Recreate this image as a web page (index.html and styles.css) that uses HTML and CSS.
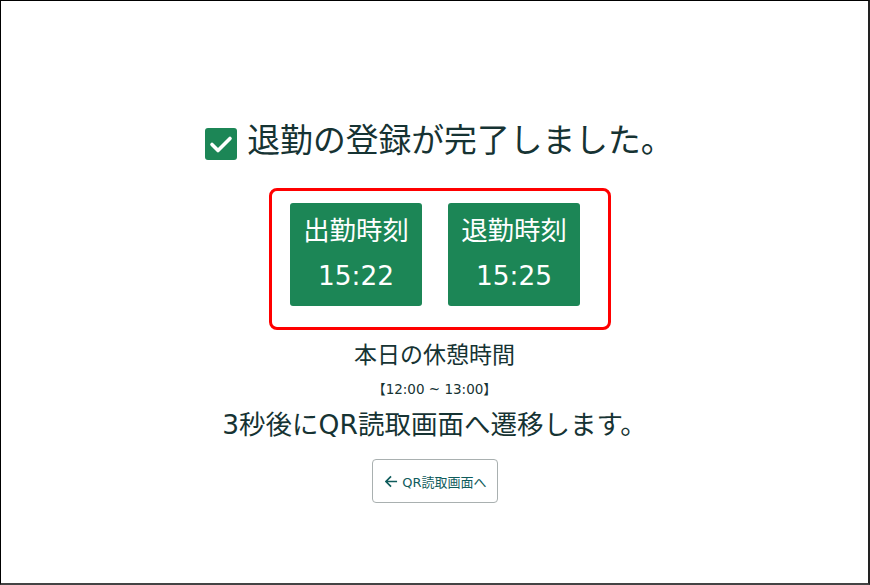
FILE: index.html
```html
<!DOCTYPE html>
<html lang="ja">
  <head>
    <meta charset="utf-8">
    <title>退勤登録完了</title>
    <link rel="stylesheet" href="styles.css">
  </head>
  <body>
    <main class="screen">
      <h1 class="title">
        <svg class="check" viewBox="0 0 32 32" aria-hidden="true">
          <rect width="32" height="32" rx="3" fill="#1c8656"/>
          <path d="M7 16.5l6 6L25 10.5" fill="none" stroke="#fff" stroke-width="3.6" stroke-linecap="round" stroke-linejoin="round"/>
        </svg>
        <span>退勤の登録が完了しました。</span>
      </h1>

      <div class="times">
        <div class="card">
          <p class="card-label">出勤時刻</p>
          <p class="card-time">15:22</p>
        </div>
        <div class="card">
          <p class="card-label">退勤時刻</p>
          <p class="card-time">15:25</p>
        </div>
      </div>

      <p class="break-title">本日の休憩時間</p>
      <p class="break-time">【12:00 ~ 13:00】</p>
      <p class="notice">3秒後にQR読取画面へ遷移します。</p>

      <a class="back" href="#">
        <svg class="arrow" viewBox="0 0 14 14" aria-hidden="true">
          <path d="M13 7H2M6.500 1.500L1 7l5.500 5.500" fill="none" stroke="#0f5c5c" stroke-width="1.800"/>
        </svg>
        <span>QR読取画面へ</span>
      </a>
    </main>
  </body>
</html>
```

FILE: styles.css
```css
html, body {
  height: 100%;
}

body {
  margin: 0;
  background: #fff;
  color: #163333;
  font-family: "DejaVu Sans", "Noto Sans CJK JP", sans-serif;
}

p, h1 {
  margin: 0;
  font-weight: 400;
}

.screen {
  box-sizing: border-box;
  height: 585px;
  padding-top: 118px;
  display: flex;
  flex-direction: column;
  align-items: center;
  border-top: 1px solid #000;
  border-left: 1px solid #000;
  border-right: 2px solid #222;
  border-bottom: 2px solid #444;
}

.title {
  display: flex;
  align-items: center;
  gap: 10px;
  height: 44px;
  margin-left: 10px;
  font-size: 32.8px;
  line-height: 44px;
}

.check {
  width: 32px;
  height: 32px;
  margin-top: 5px;
}

.times {
  box-sizing: border-box;
  width: 342px;
  height: 142px;
  margin-top: 25px;
  margin-left: 11px;
  padding: 12px 0 0 18px;
  display: flex;
  gap: 26px;
  border: 3px solid #f00;
  border-radius: 8px;
}

.card {
  width: 132px;
  height: 103px;
  border-radius: 3px;
  background: #1c8656;
  color: #fff;
  text-align: center;
}

.card-label {
  margin-top: 9px;
  font-size: 26.400px;
  line-height: 38px;
}

.card-time {
  margin-top: 7px;
  font-size: 26.400px;
  line-height: 38px;
}

.break-title {
  margin-top: 9px;
  font-size: 23px;
  line-height: 32px;
}

.break-time {
  margin-top: 9px;
  font-size: 13.500px;
  line-height: 18px;
}

.notice {
  margin-top: 9px;
  font-size: 26.500px;
  line-height: 36px;
}

.back {
  box-sizing: border-box;
  width: 126px;
  height: 44px;
  margin-top: 16px;
  padding-left: 3px;
  display: flex;
  align-items: center;
  justify-content: center;
  gap: 4px;
  border: 1px solid #a9b0b0;
  border-radius: 4px;
  color: #0f5c5c;
  font-size: 13px;
  text-decoration: none;
}

.arrow {
  width: 13px;
  height: 13px;
}
```
